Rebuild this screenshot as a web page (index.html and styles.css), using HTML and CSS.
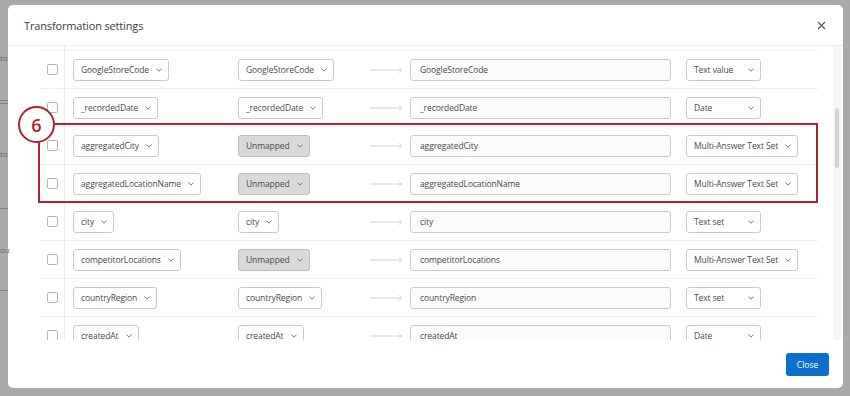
FILE: index.html
```html
<!DOCTYPE html>
<html lang="en">
  <head>
    <meta charset="UTF-8" />
    <title>Transformation settings</title>
    <link rel="stylesheet" href="styles.css">
  </head>
  <body>
    <div class="backdrop">
      <span class="bg-text bg-t1">to</span>
      <span class="bg-text bg-t2">to</span>
      <span class="bg-text bg-t3">ou</span>
      <span class="bg-line bg-l1"></span>
      <span class="bg-line bg-l2"></span>
      <span class="bg-line blue bg-l3"></span>
      <span class="bg-line blue bg-l4"></span>
    </div>
    <div class="modal">
      <div class="modal-header">
        <h1>Transformation settings</h1>
        <svg class="close-x" width="9" height="9" viewBox="0 0 9 9">
          <path d="M1 1 L8 8 M8 1 L1 8" stroke="#555" stroke-width="1.1" />
        </svg>
      </div>
      <div class="modal-body">
        <div class="scroll">
          <div class="list">
            <div class="row">
              <div class="check"><span class="box"></span></div>
              <div class="cell src"><span class="select">GoogleStoreCode<i class="chev"></i></span></div>
              <div class="cell"><span class="select">GoogleStoreCode<i class="chev"></i></span></div>
              <div class="cell"><span class="arrow"></span></div>
              <div class="cell"><span class="field">GoogleStoreCode</span></div>
              <div class="cell"><span class="select type">Text value<i class="chev"></i></span></div>
            </div>
            <div class="row">
              <div class="check"><span class="box"></span></div>
              <div class="cell src"><span class="select">_recordedDate<i class="chev"></i></span></div>
              <div class="cell"><span class="select">_recordedDate<i class="chev"></i></span></div>
              <div class="cell"><span class="arrow"></span></div>
              <div class="cell"><span class="field">_recordedDate</span></div>
              <div class="cell"><span class="select type">Date<i class="chev"></i></span></div>
            </div>
            <div class="row">
              <div class="check"><span class="box"></span></div>
              <div class="cell src"><span class="select">aggregatedCity<i class="chev"></i></span></div>
              <div class="cell"><span class="select off">Unmapped<i class="chev"></i></span></div>
              <div class="cell"><span class="arrow"></span></div>
              <div class="cell"><span class="field">aggregatedCity</span></div>
              <div class="cell"><span class="select type">Multi-Answer Text Set<i class="chev"></i></span></div>
            </div>
            <div class="row">
              <div class="check"><span class="box"></span></div>
              <div class="cell src"><span class="select">aggregatedLocationName<i class="chev"></i></span></div>
              <div class="cell"><span class="select off">Unmapped<i class="chev"></i></span></div>
              <div class="cell"><span class="arrow"></span></div>
              <div class="cell"><span class="field">aggregatedLocationName</span></div>
              <div class="cell"><span class="select type">Multi-Answer Text Set<i class="chev"></i></span></div>
            </div>
            <div class="row">
              <div class="check"><span class="box"></span></div>
              <div class="cell src"><span class="select">city<i class="chev"></i></span></div>
              <div class="cell"><span class="select">city<i class="chev"></i></span></div>
              <div class="cell"><span class="arrow"></span></div>
              <div class="cell"><span class="field">city</span></div>
              <div class="cell"><span class="select type">Text set<i class="chev"></i></span></div>
            </div>
            <div class="row">
              <div class="check"><span class="box"></span></div>
              <div class="cell src"><span class="select">competitorLocations<i class="chev"></i></span></div>
              <div class="cell"><span class="select off">Unmapped<i class="chev"></i></span></div>
              <div class="cell"><span class="arrow"></span></div>
              <div class="cell"><span class="field">competitorLocations</span></div>
              <div class="cell"><span class="select type">Multi-Answer Text Set<i class="chev"></i></span></div>
            </div>
            <div class="row">
              <div class="check"><span class="box"></span></div>
              <div class="cell src"><span class="select">countryRegion<i class="chev"></i></span></div>
              <div class="cell"><span class="select">countryRegion<i class="chev"></i></span></div>
              <div class="cell"><span class="arrow"></span></div>
              <div class="cell"><span class="field">countryRegion</span></div>
              <div class="cell"><span class="select type">Text set<i class="chev"></i></span></div>
            </div>
            <div class="row">
              <div class="check"><span class="box"></span></div>
              <div class="cell src"><span class="select">createdAt<i class="chev"></i></span></div>
              <div class="cell"><span class="select">createdAt<i class="chev"></i></span></div>
              <div class="cell"><span class="arrow"></span></div>
              <div class="cell"><span class="field">createdAt</span></div>
              <div class="cell"><span class="select type">Date<i class="chev"></i></span></div>
            </div>
          </div>
          <!-- callout drawn over the two highlighted rows -->
          <div class="callout"></div>
          <div class="callout-num">6</div>
        </div>
        <div class="scrollbar"><span class="thumb"></span></div>
      </div>
      <div class="modal-footer">
        <button class="btn-close">Close</button>
      </div>
    </div>
  </body>
</html>
```

FILE: styles.css
```css
* {
  box-sizing: border-box;
  margin: 0;
  padding: 0;
}
body {
  font-family: "Open Sans", "Liberation Sans", sans-serif;
  background: #a9a9a9;
  color: #444;
  width: 850px;
  height: 396px;
  overflow: hidden;
  position: relative;
}
.backdrop {
  position: absolute;
  left: 0;
  top: 0;
  width: 8px;
  height: 396px;
}
.bg-text {
  position: absolute;
  left: 0;
  font-size: 8px;
  color: #666;
}
.bg-t1 { top: 52px; }
.bg-t2 { top: 148px; }
.bg-t3 { top: 244px; }
.bg-line {
  position: absolute;
  left: 0;
  width: 8px;
  height: 1px;
  background: #7d7d7d;
}
.bg-line.blue { background: #6d86a3; }
.bg-l1 { top: 100px; }
.bg-l2 { top: 103px; }
.bg-l3 { top: 208px; }
.bg-l4 { top: 290px; }

.modal {
  margin: 5px 7px 0 8px;
  height: 383px;
  background: #fff;
  border-radius: 5px;
  display: flex;
  flex-direction: column;
  overflow: hidden;
}
.modal-header {
  height: 41px;
  flex: none;
  display: flex;
  align-items: center;
  justify-content: space-between;
  padding: 0 17px 0 16px;
  border-bottom: 1px solid #ececec;
}
.modal-header h1 {
  font-size: 11px;
  font-weight: 400;
  color: #3c3c3c;
  letter-spacing: -0.15px;
}
.modal-body {
  flex: 1;
  display: flex;
  min-height: 0;
}
.scroll {
  flex: 1;
  position: relative;
  overflow: hidden;
  padding: 4px 15px 0 32px;
}
.list {
  background: linear-gradient(#ececec, #ececec) 24px 0 / 1px 100% no-repeat;
  margin-top: -4px;
  padding-top: 4px;
}
.row {
  display: grid;
  grid-template-columns: 24px 174px 132px 40px 276px auto;
  align-items: center;
  height: 38px;
  border-top: 1px solid #efefef;
}
.check {
  display: flex;
  justify-content: center;
}
.box {
  width: 11px;
  height: 11px;
  border: 1px solid #b5b5b5;
  border-radius: 2px;
  background: #fff;
}
.cell {
  display: flex;
  align-items: center;
}
.src {
  padding-left: 9px;
}
.select {
  display: inline-flex;
  align-items: center;
  justify-content: space-between;
  gap: 7px;
  height: 22px;
  padding: 0 6px 0 7px;
  font-size: 8.5px;
  letter-spacing: -0.1px;
  color: #4a4a4a;
  background: #fff;
  border: 1px solid #c9c9c9;
  border-radius: 3px;
  white-space: nowrap;
}
.select.off {
  background: #d9d9d9;
  border-color: #bdbdbd;
}
.select.type {
  min-width: 75px;
}
.chev {
  width: 6px;
  height: 6px;
  flex: none;
  background: no-repeat center / 6px 4px url("data:image/svg+xml,%3Csvg xmlns='http://www.w3.org/2000/svg' width='6' height='4' viewBox='0 0 6 4'%3E%3Cpath d='M0.5 0.6 L3 3.2 L5.5 0.6' fill='none' stroke='%23666' stroke-width='0.9'/%3E%3C/svg%3E");
}
.arrow {
  width: 33px;
  height: 8px;
  background: no-repeat url("data:image/svg+xml,%3Csvg xmlns='http://www.w3.org/2000/svg' width='33' height='8' viewBox='0 0 33 8'%3E%3Cpath d='M0 4 H31.5 M29 1.3 L31.8 4 L29 6.7' fill='none' stroke='%23d2d2d2' stroke-width='1'/%3E%3C/svg%3E");
}
.field {
  width: 261px;
  height: 22px;
  display: flex;
  align-items: center;
  padding-left: 9px;
  font-size: 8.5px;
  letter-spacing: -0.1px;
  color: #4a4a4a;
  background: #fbfbfb;
  border: 1px solid #cbcbcb;
  border-radius: 3px;
}
.callout {
  position: absolute;
  left: 30px;
  top: 76.5px;
  width: 780px;
  height: 80.5px;
  border: 2.5px solid #ad2333;
}
.callout-num {
  position: absolute;
  left: 10px;
  top: 60px;
  width: 37px;
  height: 37px;
  border: 2.5px solid #ad2333;
  border-radius: 50%;
  background: #fff;
  color: #ad2333;
  font-size: 18px;
  font-weight: 600;
  display: flex;
  align-items: center;
  justify-content: center;
}
.scrollbar {
  width: 8px;
  flex: none;
  background: #f5f5f5;
  margin-right: 2px;
  position: relative;
}
.thumb {
  position: absolute;
  left: 2px;
  top: 62px;
  width: 4px;
  height: 60px;
  border-radius: 2px;
  background: #d4d4d4;
}
.modal-footer {
  height: 48px;
  flex: none;
  display: flex;
  align-items: center;
  justify-content: flex-end;
  padding-right: 14px;
}
.btn-close {
  width: 43px;
  height: 23px;
  border: none;
  border-radius: 3px;
  background: #0c6fd0;
  color: #fff;
  font-family: inherit;
  font-size: 8.5px;
}
```
